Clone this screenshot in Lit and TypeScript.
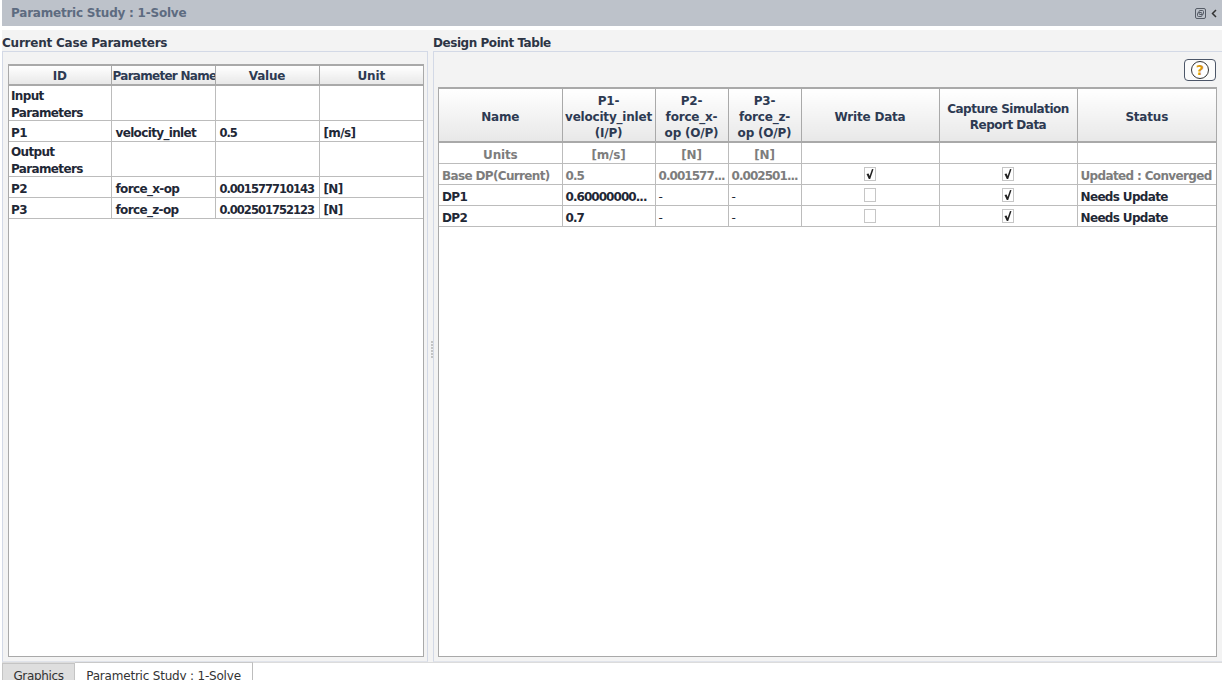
import { LitElement, html, css } from "lit";
import { customElement } from "lit/decorators.js";

const leftRows = [
  ["Input Parameters", "", "", ""],
  ["P1", "velocity_inlet", "0.5", "[m/s]"],
  ["Output Parameters", "", "", ""],
  ["P2", "force_x-op", "0.001577710143", "[N]"],
  ["P3", "force_z-op", "0.002501752123", "[N]"],
];

const designPoints = [
  { name: "Base DP(Current)", p1: "0.5", p2: "0.001577...", p3: "0.002501...", write: true, status: "Updated : Converged", base: true },
  { name: "DP1", p1: "0.60000000...", p2: "-", p3: "-", write: false, status: "Needs Update", base: false },
  { name: "DP2", p1: "0.7", p2: "-", p3: "-", write: false, status: "Needs Update", base: false },
];

@customElement("app-root")
export class AppRoot extends LitElement {
  static styles = css`
    :host {
      display: flex;
      flex-direction: column;
      position: relative;
      width: 1222px;
      height: 680px;
      overflow: hidden;
      background: #fff;
      font-family: "DejaVu Sans", sans-serif;
      font-size: 12px;
      font-weight: 700;
      color: #222b3a;
    }
    * {
      box-sizing: border-box;
    }
    .titlebar {
      flex: none;
      height: 26px;
      margin-left: 2px;
      margin-bottom: 4px;
      padding: 0 5px 0 9px;
      display: flex;
      align-items: center;
      justify-content: space-between;
      background: #bdc2ca;
      color: #5d6b80;
      font-size: 12px;
      letter-spacing: -0.22px;
    }
    .title-icons {
      display: flex;
      align-items: center;
      gap: 5px;
    }
    .main {
      flex: none;
      height: 632px;
      margin-left: 2px;
      background: #f3f3f3;
      display: grid;
      grid-template-columns: 426px 1fr;
      column-gap: 5px;
    }
    .panel {
      display: flex;
      flex-direction: column;
      min-width: 0;
    }
    .legend {
      height: 21px;
      line-height: 26px;
      color: #2d3545;
      white-space: nowrap;
      letter-spacing: -0.22px;
    }
    .legend.right {
      letter-spacing: -0.45px;
    }
    .frame {
      flex: 1;
      border: 1px solid #d3d9e6;
      border-bottom-color: #e0e3ea;
      display: flex;
      flex-direction: column;
      padding: 12px 3px 4px 5px;
      min-height: 0;
    }
    .frame.right {
      border-right: none;
      padding: 6px 5px 4px 4px;
    }
    .toolbar {
      height: 29px;
      display: flex;
      justify-content: flex-end;
      align-items: flex-start;
      flex: none;
    }
    .help {
      width: 32px;
      height: 22px;
      margin-top: 1px;
      margin-right: 1px;
      border: 1px solid #4c5668;
      border-radius: 4px;
      background: #fbfbfb;
      display: flex;
      align-items: center;
      justify-content: center;
    }
    .table-box {
      flex: 1;
      background: #fff;
      border: 1px solid #a9a9a9;
      border-top: none;
      min-height: 0;
    }
    table {
      border-collapse: collapse;
      table-layout: fixed;
      width: 100%;
    }
    th {
      background: linear-gradient(#ffffff, #e8e8e8);
      border: 1px solid #a9a9a9;
      border-top: 2px solid #a9a9a9;
      border-bottom: 2px solid #a9a9a9;
      color: #2d3a52;
      font-size: 12px;
      font-weight: 700;
      text-align: center;
      padding: 3px 0 0;
      line-height: 16px;
      letter-spacing: -0.2px;
    }
    th:first-child,
    td:first-child {
      border-left: none;
    }
    th:last-child,
    td:last-child {
      border-right: none;
    }
    td {
      border: 1px solid #bcbcbc;
      padding: 5px 0 0 3px;
      font-size: 12px;
      line-height: 14px;
      height: 21px;
      color: #1f2836;
      white-space: nowrap;
      overflow: hidden;
      letter-spacing: -0.65px;
    }
    td.wrap {
      white-space: normal;
      height: 35px;
      padding: 0 0 0 2px;
    }
    .wrap-text {
      height: 33px;
      padding-top: 2px;
      line-height: 17px;
    }
    td.num {
      letter-spacing: -0.95px;
    }
    td.dash {
      font-weight: 400;
    }
    .left-table th {
      height: 20px;
      padding-top: 2px;
      line-height: 14px;
    }
    .left-table td {
      padding-left: 4px;
    }
    .left-table td:first-child {
      padding-left: 2px;
    }
    .left-table td.num {
      font-size: 11.5px;
      letter-spacing: -1px;
    }
    .left-table th.tight {
      text-align: left;
      white-space: nowrap;
      overflow: hidden;
      padding-left: 1px;
      letter-spacing: -0.72px;
    }
    .right-table th {
      height: 54px;
    }
    .right-table th .snug {
      letter-spacing: -0.5px;
    }
    .muted td {
      color: #7d7d7d;
    }
    td.center {
      text-align: center;
      padding: 0;
      letter-spacing: -0.2px;
    }
    td.unit {
      padding-top: 6px;
      line-height: 13px;
    }
    .cb {
      display: inline-block;
      width: 12px;
      height: 14px;
      vertical-align: middle;
      background: #fff;
      border: 1px solid #c6c6c6;
    }
    .cb svg {
      display: block;
    }
    .splitter {
      position: absolute;
      left: 431px;
      top: 341px;
      display: grid;
      gap: 1px;
    }
    .splitter i {
      width: 2px;
      height: 2px;
      background: #c4c4c4;
    }
    .tabs {
      flex: none;
      height: 18px;
      display: flex;
      align-items: flex-start;
      margin-left: 2px;
      border-top: 1px solid #dcdcdc;
      font-weight: 400;
      color: #333;
    }
    .tab {
      height: 18px;
      line-height: 24px;
      font-size: 12px;
      text-align: center;
      white-space: nowrap;
      overflow: hidden;
    }
    .tab.off {
      width: 73px;
      background: #dedede;
      border: 1px solid #c4c4c4;
      border-bottom: none;
      letter-spacing: -0.35px;
    }
    .tab.on {
      width: 178px;
      margin-top: -1px;
      background: #fff;
      border-right: 1px solid #bdbdbd;
      border-top: 1px solid #c9c9c9;
      padding-top: 1px;
      letter-spacing: -0.2px;
    }
  `;

  private checkbox(on: boolean) {
    return html`<span class="cb">${on
      ? html`<svg width="10" height="12" viewBox="0 0 10 12">
          <path d="M1.5 6 L3.6 5.5 L4.6 8 L7 1 L8.5 1.3 L5.2 11 L3.8 11 Z" fill="#222" />
        </svg>`
      : ""}</span>`;
  }

  render() {
    return html`
      <div class="titlebar">
        <span>Parametric Study : 1-Solve</span>
        <span class="title-icons">
          <svg width="11" height="11" viewBox="0 0 11 11" fill="none" stroke="#555b66">
            <rect x="0.5" y="0.5" width="10" height="10" rx="1.5" />
            <rect x="4" y="2.5" width="4.5" height="4" rx="1" />
            <rect x="2.5" y="4.5" width="4.5" height="4" rx="1" />
          </svg>
          <svg width="6" height="9" viewBox="0 0 6 9" fill="none" stroke="#333" stroke-width="1.5">
            <path d="M5 1 L1.5 4.5 L5 8" />
          </svg>
        </span>
      </div>

      <div class="main">
        <section class="panel">
          <div class="legend">Current Case Parameters</div>
          <div class="frame">
            <div class="table-box">
              <table class="left-table">
                <colgroup>
                  <col style="width: 102px" /><col style="width: 104px" /><col style="width: 104px" /><col />
                </colgroup>
                <thead>
                  <tr>
                    <th>ID</th>
                    <th class="tight">Parameter Name</th>
                    <th>Value</th>
                    <th>Unit</th>
                  </tr>
                </thead>
                <tbody>
                  ${leftRows.map(
                    (r) => html`<tr>
                      <td class=${r[1] ? "" : "wrap"}>
                        ${r[1] ? r[0] : html`<div class="wrap-text">${r[0]}</div>`}
                      </td>
                      <td>${r[1]}</td>
                      <td class="num">${r[2]}</td>
                      <td>${r[3]}</td>
                    </tr>`
                  )}
                </tbody>
              </table>
            </div>
          </div>
        </section>

        <section class="panel">
          <div class="legend right">Design Point Table</div>
          <div class="frame right">
            <div class="toolbar">
              <div class="help">
                <svg width="20" height="20" viewBox="0 0 20 20">
                  <circle cx="10" cy="10" r="8.5" fill="#fff" stroke="#333" />
                  <text x="10" y="15" text-anchor="middle" font-size="14" font-weight="700" fill="#d9980f">?</text>
                </svg>
              </div>
            </div>
            <div class="table-box">
              <table class="right-table">
                <colgroup>
                  <col style="width: 123px" /><col style="width: 93px" /><col style="width: 73px" /><col style="width: 73px" />
                  <col style="width: 138px" /><col style="width: 138px" /><col />
                </colgroup>
                <thead>
                  <tr>
                    <th>Name</th>
                    <th>P1-<br />velocity_inlet<br />(I/P)</th>
                    <th>P2-<br />force_x-<br />op (O/P)</th>
                    <th>P3-<br />force_z-<br />op (O/P)</th>
                    <th>Write Data</th>
                    <th><span class="snug">Capture Simulation<br />Report Data</span></th>
                    <th>Status</th>
                  </tr>
                </thead>
                <tbody>
                  <tr class="muted">
                    <td class="center unit">Units</td>
                    <td class="center unit">[m/s]</td>
                    <td class="center unit">[N]</td>
                    <td class="center unit">[N]</td>
                    <td></td>
                    <td></td>
                    <td></td>
                  </tr>
                  ${designPoints.map(
                    (d) => html`<tr class=${d.base ? "muted" : ""}>
                      <td>${d.name}</td>
                      <td class="num">${d.p1}</td>
                      <td class=${d.p2 === "-" ? "dash" : "num"}>${d.p2}</td>
                      <td class=${d.p3 === "-" ? "dash" : "num"}>${d.p3}</td>
                      <td class="center">${this.checkbox(d.write)}</td>
                      <td class="center">${this.checkbox(true)}</td>
                      <td>${d.status}</td>
                    </tr>`
                  )}
                </tbody>
              </table>
            </div>
          </div>
        </section>
      </div>

      <div class="splitter"><i></i><i></i><i></i><i></i><i></i><i></i></div>

      <div class="tabs">
        <div class="tab off">Graphics</div>
        <div class="tab on">Parametric Study : 1-Solve</div>
      </div>
    `;
  }
}
